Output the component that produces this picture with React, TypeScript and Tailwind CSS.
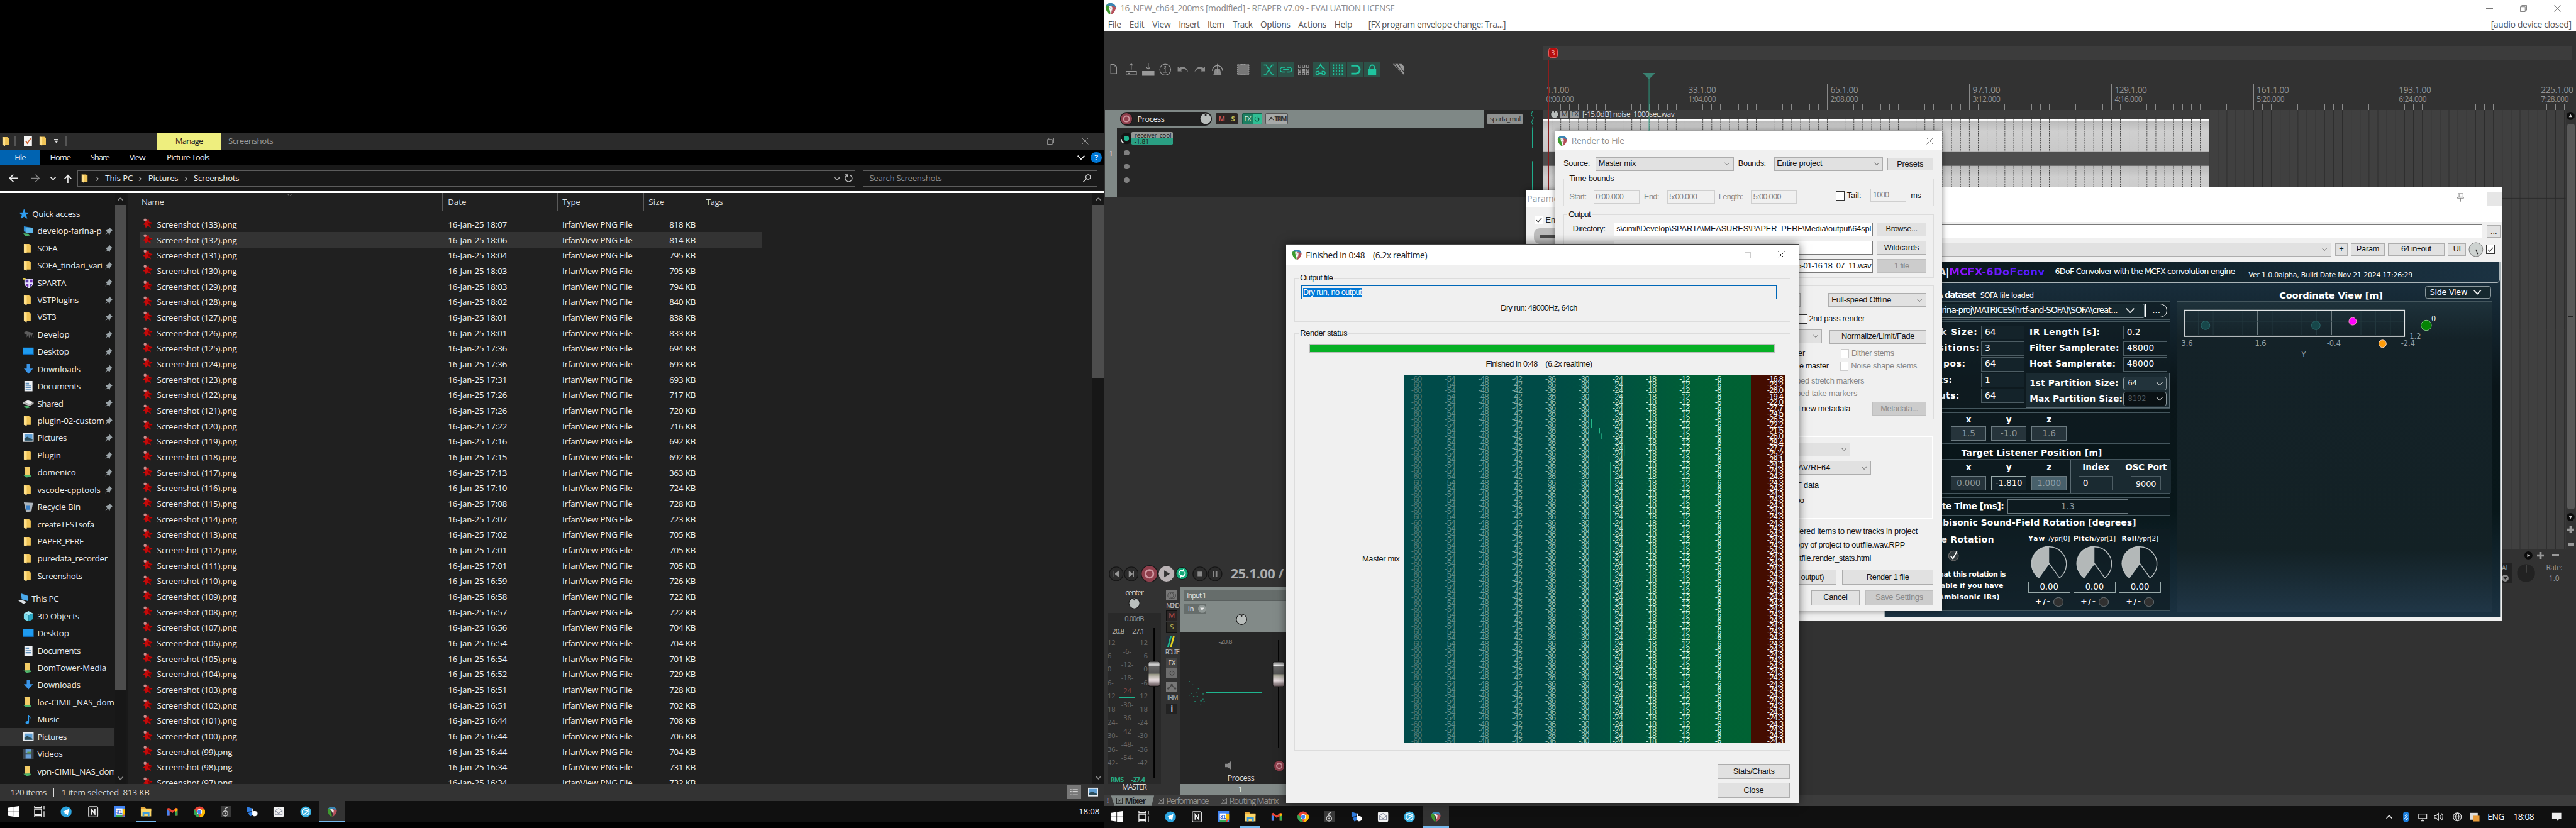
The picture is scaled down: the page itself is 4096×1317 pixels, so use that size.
import React, { useLayoutEffect, useRef, useState } from "react";

/* ---------- text fitted to a known advance width ---------- */
let measure: CanvasRenderingContext2D | null = null;
function T({ w, c = "", children }: { w?: number; c?: string; children: string }) {
  const ref = useRef<HTMLSpanElement>(null);
  const [ls, setLs] = useState(0);
  useLayoutEffect(() => {
    if (!w || !ref.current) return;
    measure = measure || document.createElement("canvas").getContext("2d");
    if (!measure) return;
    const cs = getComputedStyle(ref.current);
    measure.font = `${cs.fontWeight} ${cs.fontSize} ${cs.fontFamily}`;
    setLs((w - measure.measureText(children).width) / children.length);
  }, [w, children]);
  return (
    <span ref={ref} className={"whitespace-pre shrink-0 " + c} style={{ letterSpacing: ls }}>
      {children}
    </span>
  );
}

const UI = "font-['Open_Sans','Noto_Sans',sans-serif]";
const MS = "font-['Liberation_Sans',sans-serif]";
const VD = "font-['DejaVu_Sans',sans-serif]";

/* ---------- icons ---------- */
const Reaper = ({ s = "w-[20px] h-[20px]" }: { s?: string }) => (
  <svg viewBox="0 0 20 20" className={s + " shrink-0"}>
    <path d="M10 0C4 0 1 4 1 7c0 5 4 11 8 13 1-4-1-8-2-11C6 6 8 4 10 4z" fill="#3f9b2f" />
    <path d="M2 4C4 1 7 0 10 0c5 0 8 3 9 7l-4 1c-1-3-4-4-7-4z" fill="#3b86b5" />
    <path d="M7 6c3-2 8-1 12 1 0 5-4 11-9 13 2-4 2-8-3-14z" fill="#b5505a" />
    <path d="M6 5c3-1 6 0 7 3l-1 7C11 11 9 8 6 5z" fill="#eef2f0" />
  </svg>
);
const Folder = ({ s = "w-[14px] h-[18px]" }: { s?: string }) => (
  <svg viewBox="0 0 14 18" className={s + " shrink-0"}>
    <path d="M1 1h9l3 2v13H3z" fill="#f0c457" />
    <path d="M1 1l5 1v16l-5-2z" fill="#ffe08a" />
  </svg>
);
const Pin = () => (
  <svg viewBox="0 0 14 14" className="w-[14px] h-[14px] shrink-0">
    <path d="M8 0l6 6-2 1-2 3-1 3-3-3-5 4 4-5-3-3 3-1 3-2z" fill="#9aa3a8" />
  </svg>
);
function NavIcon({ k }: { k: string }) {
  if (k === "f") return <Folder />;
  return (
    <svg viewBox="0 0 18 18" className="w-[18px] h-[18px] shrink-0">
      {k === "star" && <path d="M9 0l2.400 6.200 6.600.4-5.200 4.200 1.800 6.700L9 13.700l-5.600 3.800 1.800-6.700L0 6.600l6.600-.4z" fill="#2f9df0" />}
      {k === "net" && <><path d="M1 1l12 2v9L1 10z" fill="#2f8fd6" /><path d="M4 3l13 1v9L4 12z" fill="#5db5ea" /><path d="M0 13l9 1 3 3-8 1z" fill="#4db36b" /></>}
      {k === "shield" && <><path d="M2 1h15v8c0 4-3 7-7 9-5-2-8-5-8-9z" fill="#e6e0ff" /><path d="M4 3h5v5H4zM11 10h5c-1 3-3 5-5 6z" fill="#5a3aa8" /><path d="M11 3h5v5h-5zM4 10h5v6c-3-1-5-4-5-6z" fill="#6a2ab0" /><path d="M0 0h4v3H0z" fill="#e8d24a" /></>}
      {k === "horse" && <path d="M0 6l5-3 12 3 1 8h-1l-1-6-2 7-1-6-3 6-1-6-3 5V9z" fill="#5d5d5d" />}
      {k === "desk" && <><path d="M0 2h18v13H0z" fill="#1e9bf0" /><path d="M0 13h18v2H0z" fill="#0b62b0" /></>}
      {k === "down" && <path d="M6 0h6v8h5l-8 9-8-9h5z" fill="#3a95e8" />}
      {k === "doc" && <><path d="M2 0h14v18H2z" fill="#eef1f4" /><path d="M4 3h6v3H4zM4 8h10v1H4zM4 11h10v1H4zM4 14h10v1H4z" fill="#5c8db8" /></>}
      {k === "drive" && <><path d="M0 7l8-3 10 3-7 4z" fill="#e8e8e8" /><path d="M0 7l11 4v3L0 10zM18 7l-7 4v3l7-4z" fill="#b5b5b5" /><path d="M0 13l9 1 2 3-6 1z" fill="#4db36b" /></>}
      {k === "pic" && <><path d="M0 1h18v15H0z" fill="#e9eef3" /><path d="M2 3h14v11H2z" fill="#5f9fd4" /><path d="M2 10l5-3 9 5v2H2z" fill="#2c4c5a" /></>}
      {k === "fnet" && <><path d="M2 0h9v14H3z" fill="#f3cc66" /><path d="M0 14l12-1 2 3-8 2z" fill="#4db36b" /></>}
      {k === "bin" && <><path d="M1 1l16 1-3 15-9 1z" fill="#aeb6bd" /><path d="M5 7h7v7H5z" fill="#3a7fc4" /></>}
      {k === "pc" && <><path d="M5 0l12 4v9L6 10z" fill="#4aa8ea" /><path d="M0 12l6-1 9 4-6 3z" fill="#dadfe3" /></>}
      {k === "cube" && <><path d="M1 4l8-4 8 4-8 3z" fill="#a6eaf5" /><path d="M1 4l8 3v11l-8-4z" fill="#7bdcec" /><path d="M17 4L9 7v11l8-4z" fill="#2ba7c4" /></>}
      {k === "music" && <path d="M8 0c1 3 5 4 5 8-1-2-2-3-3-3v9c0 5-7 4-6 0 1-2 3-2 4-2z" fill="#2f9df0" />}
      {k === "vid" && <><path d="M0 0h18v18H0z" fill="#3c4650" /><path d="M4 1h10v7H4zM4 10h10v7H4z" fill="#6aa0d8" /><path d="M7 5h7v3H7z" fill="#5f9a4c" /></>}
    </svg>
  );
}
const Splat = () => (
  <svg viewBox="0 0 18 18" className="w-[18px] h-[18px] shrink-0">
    <path d="M2 1l5 3 3-3 1 5 6 2-4 3 1 6-5-4-4 4-1-5-4-1 4-3z" fill="#c40a0a" />
    <path d="M8 7l8 2-5 4z" fill="#8a0000" />
    <circle cx="4" cy="3" r="2.500" fill="#c98c8c" />
  </svg>
);
const Chev = ({ c = "w-[9px] h-[6px]", col = "#555", sw = 1.2 }: { c?: string; col?: string; sw?: number }) => (
  <svg viewBox="0 0 10 6" className={c + " shrink-0"}><path d="M.5.5L5 5.200 9.500.5" fill="none" stroke={col} strokeWidth={sw} /></svg>
);
const Cross = ({ col = "#777" }: { col?: string }) => (
  <svg viewBox="0 0 12 12" className="w-[12px] h-[12px] shrink-0"><path d="M.5.5l11 11M11.500.5l-11 11" stroke={col} strokeWidth="1" /></svg>
);
const Restore = ({ col = "#777" }: { col?: string }) => (
  <svg viewBox="0 0 12 12" className="w-[12px] h-[12px] shrink-0"><path d="M.5 3h8.500v8.500H.5zM3 3V.5h8.500V9H9" fill="none" stroke={col} /></svg>
);
const Power = ({ col }: { col: string }) => (
  <svg viewBox="0 0 10 10" className="w-[10px] h-[10px] shrink-0"><path d="M5 .5v4M3 2a3.600 3.600 0 104 0" fill="none" stroke={col} strokeWidth="1.300" /></svg>
);
const XBox = ({ col }: { col: string }) => (
  <svg viewBox="0 0 12 12" className="w-[11px] h-[11px] shrink-0"><path d="M.5.5h11v11H.5zM3 3l6 6M9 3L3 9" fill="none" stroke={col} strokeWidth="1.200" /></svg>
);

/* ---------- taskbar ---------- */
function TaskIcon({ i }: { i: number }) {
  return (
    <svg viewBox="0 0 20 20" className="w-[20px] h-[20px]">
      {i === 0 && <path d="M0 3l9-1.300V9.500H0zM10 1.500L20 0v9.500H10zM0 10.500h9v7.800L0 17zM10 10.500h10V20l-10-1.500z" fill="#fff" />}
      {i === 1 && <path d="M1 0v3h12V0M1 20v-3h12v3M1 5.500h12v9H1zM17.500 0v5M17.500 9v11M16 7h3" fill="none" stroke="#eee" strokeWidth="1.400" />}
      {i === 2 && <><circle cx="10" cy="10" r="9.500" fill="#2ca5e0" /><path d="M4 10l11-5-2 11-4-3-1 2-1-4z" fill="#fff" /></>}
      {i === 3 && <><rect x="2" y="1" width="16" height="18" rx="2" fill="#222" stroke="#ddd" strokeWidth="1.500" /><path d="M7 15V6l6 8V5.500" fill="none" stroke="#eee" strokeWidth="2" /></>}
      {i === 4 && <><path d="M0 0h20v20H0z" fill="#4285f4" /><path d="M15 5h5v10h-5z" fill="#fbbc04" /><path d="M4 15h11v5H4z" fill="#34a853" /><path d="M15 15h5l-5 5z" fill="#ea4335" /><path d="M4 4h11v11H4z" fill="#fff" /><text x="9.500" y="13" fontSize="9" fontWeight="700" textAnchor="middle" fill="#3367d6" fontFamily="Liberation Sans, sans-serif">31</text></>}
      {i === 5 && <><path d="M1 2h7l2 2h9v5H1z" fill="#e8a93a" /><path d="M1 5h18v13H1z" fill="#fcd667" /><path d="M4 10h12v8h-3v-4H7v4H4z" fill="#3e9bdc" /></>}
      {i === 6 && <><path d="M1 4v13h4V8l5 4 5-4v9h4V4l-3-1-6 5-6-5z" fill="#ea4335" /><path d="M1 7v10h4V9z" fill="#4285f4" /><path d="M19 7v10h-4V9z" fill="#34a853" /><path d="M15 4l4 0v4l-4 2z" fill="#fbbc04" /></>}
      {i === 7 && <><circle cx="10" cy="10" r="9.500" fill="#ea4335" /><path d="M1 6l6 6 3 7.500A9.500 9.500 0 011 6z" fill="#34a853" /><path d="M10 6h9a9.500 9.500 0 01-9 13.500l4-8z" fill="#fbbc04" /><circle cx="10" cy="10" r="4.500" fill="#fff" /><circle cx="10" cy="10" r="3.400" fill="#4285f4" /></>}
      {i === 8 && <><path d="M1 0h18v20H1z" fill="#3a3a3a" /><circle cx="9" cy="13" r="4.500" fill="none" stroke="#c9c9c9" strokeWidth="1.600" /><circle cx="9" cy="13" r="1.500" fill="#c9c9c9" /><path d="M8 8l1-4 4-2" fill="none" stroke="#c9c9c9" strokeWidth="1.600" /></>}
      {i === 9 && <><path d="M1 1l9 3-1 5-8 1z" fill="#2f7de1" /><path d="M3 12l8-3 2 6-7 3z" fill="#2f7de1" /><path d="M10 4l2 0v5c5-1 8 1 7 5 0 3-3 4-6 4l-3-3z" fill="#fff" /></>}
      {i === 10 && <><rect x="1" y="1" width="18" height="18" rx="3" fill="#f2f2f2" /><path d="M4 8l6-4 6 4v7H4zM4 8l6 5 6-5" fill="none" stroke="#8a8fa0" strokeWidth="1.200" /></>}
      {i === 11 && <><circle cx="10" cy="10" r="9.500" fill="#37b1e2" /><circle cx="10" cy="10" r="6" fill="none" stroke="#fff" strokeWidth="1.600" /><path d="M5 6l9 3-8 6" fill="none" stroke="#fff" strokeWidth="1.600" /></>}
    </svg>
  );
}
function TaskApps() {
  return (
    <>
      {Array.from({ length: 13 }, (_, i) => (
        <div key={i} className={"flex flex-col items-center justify-center w-[46.200px] h-full shrink-0 relative " + (i === 12 ? "bg-[#333]" : "")}>
          {i < 12 ? <TaskIcon i={i} /> : <Reaper s="w-[18px] h-[20px]" />}
          {(i === 5 || i === 12) && <div className={"absolute bottom-0 h-[3px] bg-[#76b9ed] " + (i === 5 ? "w-[35px]" : "w-full")} />}
        </div>
      ))}
    </>
  );
}

/* ---------- file explorer ---------- */
const nav1: [string, string, number][] = [
  ["develop-farina-p", "net", 112], ["SOFA", "f", 35], ["SOFA_tindari_vari", "f", 113], ["SPARTA", "shield", 50],
  ["VSTPlugins", "f", 72], ["VST3", "f", 33], ["Develop", "horse", 56], ["Desktop", "desk", 55], ["Downloads", "down", 75],
  ["Documents", "doc", 75], ["Shared", "drive", 45], ["plugin-02-custom", "f", 116], ["Pictures", "pic", 51], ["Plugin", "f", 41],
  ["domenico", "fnet", 67], ["vscode-cpptools", "f", 110], ["Recycle Bin", "bin", 75], ["createTESTsofa", "f", 99],
  ["PAPER_PERF", "f", 80], ["puredata_recorder", "f", 122], ["Screenshots", "f", 78],
];
const nav2: [string, string, number][] = [
  ["3D Objects", "cube", 73], ["Desktop", "desk", 55], ["Documents", "doc", 75], ["DomTower-Media", "fnet", 120],
  ["Downloads", "down", 75], ["loc-CIMIL_NAS_dom", "fnet", 134], ["Music", "music", 38], ["Pictures", "pic", 51],
  ["Videos", "vid", 44], ["vpn-CIMIL_NAS_dom", "fnet", 138],
];
const files: [string, string][] = [
  ["18:07", "818"], ["18:06", "814"], ["18:04", "795"], ["18:03", "795"], ["18:03", "794"], ["18:02", "840"], ["18:01", "838"],
  ["18:01", "833"], ["17:36", "694"], ["17:36", "693"], ["17:31", "693"], ["17:26", "717"], ["17:26", "720"], ["17:22", "716"],
  ["17:16", "692"], ["17:15", "692"], ["17:13", "363"], ["17:10", "724"], ["17:08", "728"], ["17:07", "723"], ["17:02", "705"],
  ["17:01", "705"], ["17:01", "705"], ["16:59", "726"], ["16:58", "722"], ["16:57", "722"], ["16:56", "704"], ["16:54", "704"],
  ["16:54", "701"], ["16:52", "729"], ["16:51", "728"], ["16:51", "702"], ["16:44", "708"], ["16:44", "706"], ["16:44", "704"],
  ["16:34", "731"], ["16:34", "732"],
];
function NavRow({ t, k, w, pin, sel }: { t: string; k: string; w: number; pin?: boolean; sel?: boolean }) {
  return (
    <div className={"flex items-center h-[30px] w-[199px] overflow-hidden shrink-0 pl-[41px] " + (sel ? "bg-[#333]" : "")}>
      <div className="w-[24px] flex items-center shrink-0"><NavIcon k={k} /></div>
      <div className="w-[114px] flex grow leading-[20px] overflow-hidden"><T w={w}>{t}</T></div>
      {pin && <div className="w-[17px] shrink-0"><Pin /></div>}
    </div>
  );
}
function Explorer() {
  return (
    <div className={"absolute left-0 top-[231px] w-[1920px] h-[1200px] flex flex-col text-[14.500px] leading-none text-[#f0f0f0] bg-[#191919] " + UI}>
      <div className="h-[29px] flex items-center bg-[#2b2b2b] shrink-0">
        <Folder s="w-[13px] h-[19px] ml-[3px]" />
        <div className="w-[2px] h-[17px] bg-[#555] ml-[9px]" />
        <svg viewBox="0 0 14 18" className="w-[14px] h-[18px] ml-[15px]"><path d="M0 0h14v18H0z" fill="#f4f4f4" /><path d="M3 9l3 4 6-9" stroke="#d0632f" fill="none" strokeWidth="2" /></svg>
        <Folder s="w-[13px] h-[18px] ml-[12px]" />
        <svg viewBox="0 0 8 8" className="w-[8px] h-[8px] ml-[13px]"><path d="M0 0h8v1.200H0zM.5 3h7L4 7.500z" fill="#ddd" /></svg>
        <div className="w-[2px] h-[17px] bg-[#555] ml-[12px]" />
        <div className="w-[110px] h-full bg-[#eeee7e] text-[#222] flex items-center justify-center ml-[158px]"><T w={48}>Manage</T></div>
        <T w={78} c="ml-[13px] text-[#9a9a9a]">Screenshots</T>
        <div className="grow" />
        <div className="w-[12px] h-[1px] bg-[#999]" />
        <div className="ml-[46px] flex"><Restore col="#999" /></div>
        <div className="ml-[48px] mr-[27px] flex"><Cross col="#999" /></div>
      </div>
      <div className="h-[28px] flex items-center bg-black shrink-0">
        <div className="w-[70px] h-full bg-[#0063b1] flex items-center justify-center"><T w={19}>File</T></div>
        <T w={35} c="ml-[17px]">Home</T>
        <T w={33} c="ml-[35px]">Share</T>
        <T w={27} c="ml-[35px]">View</T>
        <div className="w-[110px] h-full ml-[20px] border-x border-[#1d1d1d] flex items-center justify-center"><T w={74}>Picture Tools</T></div>
        <div className="grow" />
        <Chev c="w-[13px] h-[8px]" col="#eee" sw={1.500} />
        <div className="w-[19px] h-[19px] rounded-full bg-[#0078d7] text-white flex items-center justify-center ml-[10px] mr-[4px] font-bold text-[13px]">?</div>
      </div>
      <div className="h-[45px] flex items-center shrink-0">
        <svg viewBox="0 0 16 14" className="w-[16px] h-[14px] ml-[15px]"><path d="M16 7H1.500M8 .7L1.500 7 8 13.300" fill="none" stroke="#eee" strokeWidth="2" /></svg>
        <svg viewBox="0 0 16 14" className="w-[16px] h-[14px] ml-[23px]"><path d="M0 7h14.500M8 .7L14.500 7 8 13.300" fill="none" stroke="#888" strokeWidth="1.500" /></svg>
        <Chev c="w-[10px] h-[6px] ml-[17px]" col="#eee" sw={1.800} />
        <svg viewBox="0 0 14 16" className="w-[13px] h-[16px] ml-[15px]"><path d="M7 16V1.500M.7 8L7 1.500 13.300 8" fill="none" stroke="#eee" strokeWidth="2" /></svg>
        <div className="w-[1353px] h-[28px] border border-[#5c5c5c] ml-[10px] flex items-center">
          <Folder s="w-[12px] h-[17px] ml-[5px]" />
          <Chev c="w-[8px] h-[5px] ml-[12px] -rotate-90" col="#aaa" sw={1.600} /><T w={48} c="ml-[10px]">This PC</T>
          <Chev c="w-[8px] h-[5px] ml-[9px] -rotate-90" col="#aaa" sw={1.600} /><T w={52} c="ml-[10px]">Pictures</T>
          <Chev c="w-[8px] h-[5px] ml-[9px] -rotate-90" col="#aaa" sw={1.600} /><T w={79} c="ml-[10px]">Screenshots</T>
          <div className="grow" />
          <Chev c="w-[11px] h-[7px]" col="#aaa" sw={1.800} />
          <svg viewBox="0 0 14 14" className="w-[14px] h-[14px] ml-[8px] mr-[4px]"><path d="M5 1.500A6 6 0 1010 2M5 5V1H1" fill="none" stroke="#bbb" strokeWidth="1.600" /></svg>
        </div>
        <div className="w-[408px] h-[28px] border border-[#5c5c5c] ml-[13px] flex items-center">
          <T w={126} c="ml-[10px] text-[#8f8f8f]">Search Screenshots</T>
          <div className="grow" />
          <svg viewBox="0 0 14 14" className="w-[14px] h-[14px] mr-[10px]"><circle cx="9" cy="5" r="4" fill="none" stroke="#ddd" strokeWidth="1.400" /><path d="M6 8l-5.500 5.500" stroke="#ddd" strokeWidth="1.600" /></svg>
        </div>
      </div>
      <div className="h-[3px] bg-white shrink-0" />
      <div className="h-[1028px] flex overflow-hidden shrink-0">
        <div className="w-[200px] pt-[21px] overflow-hidden">
          <div className="flex items-center h-[30px] pl-[33px]"><NavIcon k="star" /><T w={83} c="ml-[5px] leading-[20px]">Quick access</T></div>
          {nav1.map(([t, k, w], i) => <NavRow key={i} t={t} k={k} w={w} pin={i < 17} />)}
          <div className="flex items-center h-[30px] pl-[32px] mt-[10px]"><NavIcon k="pc" /><T w={47} c="ml-[5px] leading-[20px]">This PC</T></div>
          {nav2.map(([t, k, w], i) => <NavRow key={i} t={t} k={k} w={w} sel={i === 7} />)}
        </div>
        <div className="w-[20px] bg-[#171717] flex flex-col items-center">
          <Chev c="w-[10px] h-[6px] mt-[8px] rotate-180" col="#888" sw={1.800} />
          <div className="w-full h-[844px] mt-[7px] bg-[#4d4d4d]" />
          <Chev c="w-[10px] h-[6px] mt-[150px]" col="#888" sw={1.800} />
        </div>
        <div className="w-[3px] border-r border-[#2f2f2f]" />
        <div className="w-[1677px] bg-[#202020] overflow-hidden">
          <div className="flex h-[32px] items-center text-[#dedede]">
            <div className="w-[547px] h-full border-r border-[#5a5a5a] flex items-center pl-[23px] justify-start">
              <T w={39}>Name</T>
              <Chev c="w-[10px] h-[5px] ml-[214px] -mt-[26px]" col="#888" />
            </div>
            <div className="w-[200px] h-full border-r border-[#5a5a5a] flex items-center pl-[9px]"><T w={32}>Date</T></div>
            <div className="w-[150px] h-full border-r border-[#5a5a5a] flex items-center pl-[8px]"><T w={31}>Type</T></div>
            <div className="w-[100px] h-full border-r border-[#5a5a5a] flex items-center pl-[8px]"><T w={28}>Size</T></div>
            <div className="w-[111px] h-full border-r border-[#5a5a5a] flex items-center pl-[8px]"><T w={29}>Tags</T></div>
          </div>
          <div className="pt-[9px]">
            {files.map(([d, s], i) => (
              <div key={i} className={"ml-[21px] w-[1081px] h-[27px] flex items-center leading-[22px] " + (i === 1 ? "bg-[#333]" : "")}>
                <div className="w-[29px] pl-[4px] -mt-[3px]"><Splat /></div>
                <div className="w-[506px] flex"><T w={i > 33 ? 131 : 139}>{`Screenshot (${133 - i}).png`}</T></div>
                <div className="w-[199px] flex"><T w={103}>{`16-Jan-25 ${d}`}</T></div>
                <div className="w-[151px] flex"><T w={122}>IrfanView PNG File</T></div>
                <div className="w-[81px] flex justify-end"><T w={46}>{`${s} KB`}</T></div>
              </div>
            ))}
          </div>
        </div>
        <div className="w-[20px] bg-[#171717] flex flex-col items-center">
          <Chev c="w-[10px] h-[6px] mt-[8px] rotate-180" col="#888" sw={1.800} />
          <div className="w-full h-[300px] mt-[7px] bg-[#4d4d4d]" />
          <Chev c="w-[10px] h-[6px] mt-auto mb-[8px]" col="#888" sw={1.800} />
        </div>
      </div>
      <div className="h-[29px] bg-[#333] flex items-center shrink-0 text-[#dcdcdc]">
        <T w={63} c="ml-[18px]">120 items</T>
        <div className="w-px h-[14px] bg-[#ddd] ml-[12px]" />
        <T w={153} c="ml-[13px]">1 item selected  813 KB</T>
        <div className="w-px h-[14px] bg-[#ddd] ml-[13px]" />
        <div className="grow" />
        <div className="w-[24px] h-[24px] bg-[#777] flex items-center justify-center">
          <svg viewBox="0 0 14 12" className="w-[14px] h-[12px]"><path d="M0 1h3M0 4h3M0 7h3M0 10h3M5 1h9M5 4h9M5 7h9M5 10h9" stroke="#eee" /></svg>
        </div>
        <div className="ml-[12px] mr-[10px] flex"><NavIcon k="pic" /></div>
      </div>
      <div className="h-[38px] bg-[#101010] flex items-center">
        <TaskApps />
        <div className="grow" />
        <T w={36} c="mr-[8px] text-white">18:08</T>
      </div>
    </div>
  );
}

/* ---------- Reaper main window ---------- */
const menu: [string, number, string][] = [
  ["File", 23, "ml-[7px]"], ["Edit", 26, "ml-[14px]"], ["View", 32, "ml-[14px]"], ["Insert", 36, "ml-[14px]"], ["Item", 29, "ml-[14px]"],
  ["Track", 34, "ml-[15px]"], ["Options", 52, "ml-[14px]"], ["Actions", 49, "ml-[14px]"], ["Help", 31, "ml-[14px]"],
  ["[FX program envelope change: Tra...]", 239, "ml-[28px]"],
];
const tools = [
  <path key="0" d="M9 5h6l4 4v12H9zM15 5v4h4" />,
  <path key="1" d="M5 17h18v6H5zM14 14V4M11 7l3-3 3 3M8 20h3" />,
  <><path key="2" d="M14 3v10M11 10l3 3 3-3" /><path d="M4 17h20v7H4z" fill="#9a9a9a" /></>,
  <><circle key="3" cx="14" cy="14" r="9.500" /><path d="M12 12h2v6M11 18.500h6" /><circle cx="14" cy="9" r="1" /></>,
  <path key="4" d="M5 9v8h8l-3-2c4-4 9-3 13 3-1-7-8-12-15-7z" fill="#8a8a8a" stroke="none" />,
  <path key="5" d="M23 9v8h-8l3-2c-4-4-9-3-13 3 1-7 8-12 15-7z" fill="#8a8a8a" stroke="none" />,
  <><path key="6" d="M10 12h8l3 11H7z" fill="#8a8a8a" stroke="none" /><path d="M14 20V4M5 16c0-12 18-12 18 0" /></>,
];
const gtools = [
  <path key="0" d="M5 6h4l10 16h4M23 6h-4L9 22H5" />,
  <path key="1" d="M12 10H8a4 4 0 000 8h4M16 10h4a4 4 0 010 8h-4M9 14h10" />,
  null,
  <path key="3" d="M6 13l5-3 3-5 3 5 5 3M12 17H9a3 3 0 000 6h3M16 17h3a3 3 0 010 6h-3M10 20h8" />,
  <path key="4" d="M6 5v18M11 5v18M16 5v18M21 5v18" strokeDasharray="3 2" />,
  <path key="5" d="M7 7h8a7 7 0 010 14H7" strokeWidth="3" />,
  <><path key="6" d="M7 13h14v10H7z" fill="#1fc59f" stroke="none" /><path d="M10 13v-3a4 4 0 018 0v3" strokeWidth="2" /></>,
];
function Toolbar() {
  return (
    <div className="h-[28px] mt-[53px] ml-[3px] flex items-center gap-[2px]">
      {tools.map((t, i) => (
        <svg key={i} viewBox="0 0 28 28" className="w-[28px] h-[28px]" fill="none" stroke="#9a9a9a" strokeWidth="1.300">{t}</svg>
      ))}
      <svg viewBox="0 0 28 28" className="w-[28px] h-[28px] ml-[15px]"><path d="M4 5h20v18H4z" fill="#777" stroke="#aaa" strokeDasharray="2 1.500" /></svg>
      <div className="w-[13px]" />
      {gtools.map((t, i) => t ? (
        <svg key={i} viewBox="0 0 28 28" className="w-[28px] h-[28px] bg-[#2c5248]" fill="none" stroke="#1fc59f" strokeWidth="1.600">{t}</svg>
      ) : (
        <svg key={i} viewBox="0 0 28 28" className="w-[28px] h-[28px]" fill="none" stroke="#9a9a9a" strokeWidth="1.200"><path d="M5 6h4v4H5zM12 6h4v4h-4zM19 6h4v4h-4zM5 12.500h4v4H5zM19 12.500h4v4h-4zM5 19h4v4H5zM12 19h4v4h-4zM19 19h4v4h-4z" /><path d="M12 12.500h4v4h-4z" fill="#9a9a9a" /></svg>
      ))}
      <svg viewBox="0 0 28 28" className="w-[28px] h-[28px] ml-[16px]" fill="#999"><path d="M3 4h15l5 5v16zM8 3l14 20" /><path d="M6 4l16 20M12 4l10 14" stroke="#333" strokeWidth="1.200" /></svg>
    </div>
  );
}
const Knob = ({ s = "w-[20px] h-[20px]" }: { s?: string }) => (
  <svg viewBox="0 0 20 20" className={s + " shrink-0"}><circle cx="10" cy="10" r="9" fill="#b9bebc" stroke="#1b1b1b" strokeWidth="1.200" /><circle cx="10" cy="4" r="1.500" fill="#222" /></svg>
);
const Rec = ({ s = "w-[21px] h-[21px]" }: { s?: string }) => (
  <svg viewBox="0 0 20 20" className={s + " shrink-0"}><circle cx="10" cy="10" r="9.500" fill="#8f3f4c" stroke="#1a1a1a" /><circle cx="10" cy="10" r="4.500" fill="none" stroke="#cf97a0" strokeWidth="2" /></svg>
);
const ruler: [string, string, number][] = [
  ["1.1.00", "0:00.000", 40], ["33.1.00", "1:04.000", 48], ["65.1.00", "2:08.000", 48], ["97.1.00", "3:12.000", 48],
  ["129.1.00", "4:16.000", 56], ["161.1.00", "5:20.000", 56], ["193.1.00", "6:24.000", 56], ["225.1.00", "7:28.000", 56],
];
function Arrange() {
  return (
    <svg viewBox="0 0 1779 764" className="w-[1779px] h-[764px] block" preserveAspectRatio="none">
      <defs>
        <pattern id="grid" width="15.447" height="764" patternUnits="userSpaceOnUse"><path d="M.5 0v764" stroke="#2a2a2a" /></pattern>
        <pattern id="dots" width="15.447" height="4" patternUnits="userSpaceOnUse"><path d="M.5 0v2.500" stroke="#333" /></pattern>
        <linearGradient id="wv" x1="0" x2="0" y1="0" y2="1"><stop offset="0" stopColor="#b9b9b9" /><stop offset=".35" stopColor="#cfcfcf" /><stop offset="1" stopColor="#c9c9c9" /></linearGradient>
      </defs>
      <rect width="1779" height="764" fill="#404040" />
      <rect width="1779" height="764" fill="url(#grid)" />
      <rect width="1159" height="16" fill="#3d3d3d" />
      <rect y="16" width="1159" height="137" fill="#4d4d4d" />
      <rect y="18" width="1159" height="54" fill="url(#wv)" />
      <rect y="97" width="1159" height="56" fill="url(#wv)" />
      <rect y="16" width="1159" height="2.500" fill="#fff" />
      <rect y="10" width="1159" height="62" fill="url(#dots)" />
      <rect y="97" width="1159" height="56" fill="url(#dots)" />
      <rect y="153" width="1779" height="1" fill="#2a2a2a" />
    </svg>
  );
}
function TrackPanel() {
  return (
    <div className="w-[763px] h-[152px] flex pl-[2px]">
      <div className="w-[20px] bg-[#7f8886] flex items-center justify-center text-white text-[12px]">1</div>
      <div className="grow bg-[#262626] flex flex-col">
        <div className="h-[32px] flex items-center bg-[#262626]">
          <div className="w-[638px] h-full bg-[#7f8886] flex items-center">
            <div className="ml-[6px] w-[160px] h-[24px] rounded-full bg-[#222] flex items-center">
              <Rec s="w-[22px] h-[22px]" />
              <T w={47} c="ml-[8px] text-[#e6e6e6] text-[14px]">Process</T>
              <div className="grow" /><Knob s="w-[22px] h-[22px]" />
            </div>
            <div className="ml-[6px] w-[39px] h-[20px] rounded-[2px] bg-[#2b2524] flex items-center justify-around text-[12px] font-bold"><span className="text-[#c4524f]">M</span><span className="text-[#c5bd55]">S</span></div>
            <div className="ml-[7px] w-[35px] h-[20px] rounded-[2px] bg-[#1c7f62] border border-[#175b46] flex items-center text-[12px] text-[#c9f0e2] overflow-hidden"><T w={11} c="ml-[3px] mr-[4px]">FX</T><div className="grow h-full bg-[#2fbf94] flex items-center justify-center"><Power col="#0f4f3b" /></div></div>
            <div className="ml-[6px] w-[39px] h-[20px] rounded-[2px] bg-[#a7aaa9] border border-[#555] flex items-center justify-center text-[11px] font-bold text-[#333]">
              <svg viewBox="0 0 12 8" className="w-[12px] h-[9px]"><path d="M1 7l5-5 5 5" fill="none" stroke="#333" strokeWidth="1.300" /><circle cx="6" cy="2" r="1.700" fill="#333" /></svg>
              <T w={20}>TRIM</T>
            </div>
          </div>
          <div className="ml-[6px] w-[63px] h-[16px] rounded-[2px] bg-[#8f9190] flex items-center justify-center text-[12px] text-[#222]"><T w={53}>sparta_mul</T></div>
        </div>
        <div className="h-[36px] flex items-center pl-[6px]">
          <svg viewBox="0 0 22 22" className="w-[22px] h-[22px]"><circle cx="11" cy="11" r="10" fill="#151515" /><circle cx="11" cy="11" r="4.500" fill="#1fb58f" /><path d="M2 12c0 3 2 6 4 7" stroke="#ddd" strokeWidth="2" fill="none" /></svg>
          <div className="-ml-[2px] w-[72px] h-[22px] rounded-[2px] overflow-hidden text-[11px] text-[#1a1a1a]">
            <div className="h-[11px] bg-[#969896] pl-[5px] leading-[11px] overflow-hidden"><T w={64}>receiver_cool</T></div>
            <div className="h-[11px] bg-[#2a9f83] pl-[5px] leading-[11px]">-1.81</div>
          </div>
        </div>
        <div className="flex flex-col gap-[15px] pl-[13px] pt-[2px]">
          {[0, 1, 2].map(i => <div key={i} className="w-[9px] h-[9px] rounded-full bg-[#808080]" />)}
        </div>
      </div>
      <svg viewBox="0 0 10 152" className="absolute left-[740px] w-[10px] h-[152px]"><path d="M5 2l-2 6 4 5-3 8 2 6-1 6v33M5 89v63" stroke="#1fc59f" fill="none" /></svg>
    </div>
  );
}
const scaleSide = ["12", "6", "0-", "6-", "12-", "18-", "24-", "30-", "36-", "42-"];
const scaleR = ["12", "6", "-0", "-6", "-12", "-18", "-24", "-30", "-36", "-42"];
const scaleMid = ["-6-", "-12-", "-18-", "-24-", "-30-", "-36-", "-42-", "-48-", "-54-"];
const Fader = ({ h, y }: { h: number; y: number }) => (
  <svg viewBox={`0 0 22 ${h}`} className="w-[22px] shrink-0" height={h}>
    <defs><linearGradient id="fd" x1="0" x2="0" y1="0" y2="1"><stop offset="0" stopColor="#666" /><stop offset=".15" stopColor="#eee" /><stop offset=".2" stopColor="#666" /><stop offset=".48" stopColor="#555" /><stop offset=".52" stopColor="#998" /><stop offset=".75" stopColor="#e8dde0" /><stop offset="1" stopColor="#5b4d50" /></linearGradient></defs>
    <path d={`M11 0v${h}`} stroke="#000" strokeWidth="2" />
    <rect x="1" y={y} width="20" height="43" rx="3" fill="url(#fd)" stroke="#111" />
  </svg>
);
function Mixer() {
  return (
    <div className="flex h-[364px]">
      <div className="w-[99px] pl-[6px] flex flex-col items-center text-[12px]">
        <T w={31} c="mt-[5px] text-[13px] text-[#ddd]">center</T>
        <div className="mt-[1px] flex"><Knob s="w-[21px] h-[21px]" /></div>
        <div className="w-[93px] h-[298px] mt-[6px] bg-[#292929] flex flex-col">
          <T w={33} c="mx-auto mt-[5px] text-[#999]">0.00dB</T>
          <div className="flex items-start mt-[10px]">
            <div className="w-[70px] flex flex-col text-[#6a6a6a]">
              <div className="flex justify-between pl-[5px] pr-[6px] text-[#bbb] h-[14px]"><T w={24}>-20.8</T><T w={24}>-27.1</T></div>
              <div className="flex justify-between h-[244px]">
                <div className="w-[18px] flex flex-col">{scaleSide.map(s => <div key={s} className="h-[23.200px] leading-[22px]">{s}</div>)}</div>
                <div className="relative flex flex-col items-center mt-[15px] w-[28px]">
                  {scaleMid.map(s => <div key={s} className={"h-[23.200px] leading-[22px] " + (s === "-24-" ? "text-[#8a4a4a]" : "")}>{s}</div>)}
                  <div className="absolute left-0 top-[91px] w-[28px] h-[2px] bg-[#1fb58f]" />
                </div>
                <div className="w-[19px] flex flex-col items-end">{scaleR.map(s => <div key={s} className="h-[23.200px] leading-[22px]">{s}</div>)}</div>
              </div>
              <div className="flex justify-between px-[5px] text-[#27a982] font-bold"><T w={23}>RMS</T><T w={24}>-27.4</T></div>
            </div>
            <Fader h={261} y={58} />
          </div>
        </div>
        <T w={42} c="-mt-[1px] text-[13px] text-[#ddd]">MASTER</T>
      </div>
      <div className="w-[34px] flex flex-col items-center text-[11px] text-[#bbb] pt-[7px] pl-[4px]">
        <svg viewBox="0 0 20 18" className="w-[20px] h-[18px] shrink-0"><path d="M0 0h20v18H0z" fill="#777" /><circle cx="8" cy="9" r="5" fill="none" stroke="#444" /><circle cx="12" cy="9" r="5" fill="none" stroke="#444" /></svg>
        <T w={20} c="mt-[3px]">MONO</T>
        <div className="w-[20px] h-[19px] bg-[#2a2424] border border-[#111] mt-[3px] flex items-center justify-center text-[#c4524f] text-[12px]">M</div>
        <div className="w-[20px] h-[19px] bg-[#2a2824] border border-[#111] mt-px flex items-center justify-center text-[#c5bd55] text-[12px]">S</div>
        <svg viewBox="0 0 20 19" className="w-[20px] h-[19px] mt-[6px]"><path d="M0 0h20v19H0z" fill="#26323a" /><path d="M2 19L7 0h3L5 19z" fill="#1fb58f" /><path d="M7 19l5-19h3l-5 19z" fill="#e8d21e" /></svg>
        <T w={23} c="mt-[3px]">ROUTE</T>
        <div className="w-[20px] h-[18px] bg-[#444] mt-[5px] flex items-center justify-center text-[12px] text-[#ddd]">FX</div>
        <div className="w-[20px] h-[16px] bg-[#6d6d6d] flex items-center justify-center"><Power col="#333" /></div>
        <svg viewBox="0 0 20 18" className="w-[20px] h-[18px] mt-[7px]"><path d="M0 0h20v18H0z" fill="#777" /><path d="M4 13l6-7 6 7" stroke="#444" fill="none" strokeWidth="1.500" /><circle cx="10" cy="6" r="2" fill="#444" /><circle cx="4" cy="12" r="2" fill="#444" /><circle cx="16" cy="12" r="2" fill="#444" /></svg>
        <T w={19} c="mt-[4px]">TRIM</T>
        <div className="w-[20px] h-[18px] bg-[#222] mt-[6px] flex items-center justify-center text-[13px] font-bold text-[#ddd]">i</div>
      </div>
      <div className="w-[190px] bg-[#262626] flex flex-col">
        <div className="h-[80px] bg-[#828a88] pl-[6px] pt-[6px] shrink-0">
          <div className="h-[20px] bg-[#666d6b] border border-[#5a605f] flex items-center pl-[4px] text-[12px] text-[#e8e8e8]"><T w={33}>Input 1</T></div>
          <div className="w-[39px] h-[19px] rounded-[4px] bg-[#666d6b] mt-[4px] flex items-center pl-[7px] text-[12px] text-[#eee]">in<svg viewBox="0 0 14 14" className="ml-[7px] w-[14px] h-[14px]"><circle cx="7" cy="7" r="7" fill="#8f9795" /><path d="M3.500 5h7L7 10z" fill="#eee" /></svg></div>
          <div className="flex pl-[90px] -mt-[1px]"><Knob /></div>
        </div>
        <div className="h-[222px] flex items-start justify-end shrink-0 pt-[14px] pr-[8px]">
          <svg viewBox="0 0 140 200" className="w-[140px] h-[200px]">
            <path d="M30 91h98" stroke="#1fb58f" strokeWidth="1.500" />
            <path d="M0 72h2M6 78h2M16 85h2M12 92h2M0 96h2M8 98h2M4 93h2M14 98h2M24 94h3M20 106h3M26 107h2M10 107h2M20 113h2M24 103h2" stroke="#1fb58f" />
            <text x="52" y="6" fontSize="12" fill="#888" fontFamily="Open Sans, sans-serif" textLength="24">-20.8</text>
          </svg>
          <div className="ml-[6px]"><Fader h={187} y={38} /></div>
        </div>
        <div className="flex items-center justify-end h-[20px] pr-[8px] shrink-0">
          <svg viewBox="0 0 10 14" className="w-[10px] h-[14px] mr-[74px]"><path d="M0 4h4l6-4v14l-6-4H0z" fill="#8a8a8a" /></svg><Rec s="w-[20px] h-[20px]" />
        </div>
        <div className="flex grow items-center justify-center text-[14px] text-[#ddd]"><T w={47} c="mr-[-20px]">Process</T></div>
        <div className="h-[20px] bg-[#828a88] flex items-center justify-center text-[13px] text-[#eee] shrink-0"><span className="-mr-[18px]">1</span></div>
      </div>
    </div>
  );
}
const RoundBtn = ({ children }: { children: React.ReactNode }) => (
  <svg viewBox="0 0 26 26" className="w-[26px] h-[26px]"><circle cx="13" cy="13" r="12" fill="#2b2b2b" stroke="#161616" strokeWidth="1.500" />{children}</svg>
);
const ScrollDot = ({ d }: { d: string }) => (
  <svg viewBox="0 0 14 14" className="w-[14px] h-[14px] shrink-0"><circle cx="7" cy="7" r="7" fill="#0c0c0c" /><path d={d} fill="#ccc" /></svg>
);
const Plus = () => (
  <svg viewBox="0 0 12 12" className="w-[12px] h-[12px] shrink-0"><path d="M4 0h4v4h4v4H8v4H4V8H0V4h4z" fill="#999" /></svg>
);
function ReaperMain() {
  return (
    <div className={"absolute left-[1920px] top-0 w-[2560px] h-[1440px] bg-[#323232] leading-none flex flex-col " + UI}>
      <div className="h-[54px] bg-white shrink-0 text-[15px]">
        <div className="h-[30px] flex items-center text-[#8c8c8c]">
          <Reaper s="w-[20px] h-[20px] ml-[2px]" />
          <T w={478} c="ml-[6px] mt-[-1px]">16_NEW_ch64_200ms [modified] - REAPER v7.09 - EVALUATION LICENSE</T>
          <div className="grow" />
          <div className="w-[12px] h-px bg-[#777]" />
          <div className="ml-[47px] flex"><Restore /></div>
          <div className="ml-[47px] mr-[26px] flex"><Cross /></div>
        </div>
        <div className="h-[24px] flex items-center text-[#555]">
          {menu.map(([t, w, m]) => <T key={t} w={w} c={m}>{t}</T>)}
          <div className="grow" />
          <T w={140} c="mr-[8px]">[audio device closed]</T>
        </div>
      </div>
      <div className="flex h-[137px] shrink-0">
        <div className="w-[763px]"><Toolbar /></div>
        <div className="w-[1797px] pt-[26px]">
          <div className="h-[24px] w-[1789px] bg-[#3c3c3c] flex items-center">
            <div className="ml-[10px] w-[16px] h-[17px] rounded-[5px] bg-[#b80e0e] border border-[#e06060] text-[#f5b0b0] text-[12px] flex items-center justify-center">3</div>
          </div>
          <div className="mt-[42px] h-[45px] flex overflow-hidden text-[#939393]">
            {ruler.map(([a, b, w]) => (
              <div key={a} className="w-[247.150px] h-[45px] border-l border-[#8a8a8a] shrink-0 pl-[5px] flex flex-col items-start">
                <T w={w} c="text-[15px] mt-[3px]">{a}</T>
                <div className="h-px w-[48px] bg-[#8a8a8a] mt-[-1px] shrink-0" />
                <T w={48} c="text-[13px] mt-[2px]">{b}</T>
              </div>
            ))}
          </div>
          <div className="h-[10px] -mt-[10px] bg-[repeating-linear-gradient(90deg,#8a8a8a_0_1px,transparent_1px_15.447px)]" />
        </div>
      </div>
      <div className="flex h-[764px] shrink-0 relative">
        <TrackPanel />
        <Arrange />
        <div className="w-[18px] bg-[#333] flex flex-col items-center pt-[4px]">
          <ScrollDot d="M4 9h6L7 4z" />
          <div className="w-[13px] h-[670px] mt-[7px] rounded-[4px] bg-[#595959] flex flex-col pt-[334px] items-center"><div className="w-[8px] h-[2px] bg-[#222]" /></div>
          <div className="mt-[7px] flex"><ScrollDot d="M4 5h6l-3 5z" /></div>
          <div className="mt-[8px] flex"><Plus /></div>
          <span className="w-[11px] h-[4px] bg-[#999] mt-[18px]" />
        </div>
      </div>
      <div className="flex h-[65px] shrink-0 items-start">
        <div className="flex items-center pl-[8px] pt-[28px]">
          <RoundBtn><path d="M9 8v10M17 8l-6 5 6 5z" stroke="#999" fill="#999" /></RoundBtn>
          <RoundBtn><path d="M17 8v10M9 8l6 5-6 5z" stroke="#999" fill="#999" /></RoundBtn>
          <div className="ml-[4px] flex"><Rec s="w-[30px] h-[30px]" /></div>
          <svg viewBox="0 0 30 30" className="w-[30px] h-[30px]"><circle cx="15" cy="15" r="14" fill="#b9b2b4" stroke="#222" /><path d="M11 9l10 6-10 6z" fill="#333" /></svg>
          <svg viewBox="0 0 24 24" className="w-[23px] h-[24px]"><circle cx="12" cy="12" r="11" fill="#12a878" stroke="#111" /><path d="M7 15a6 6 0 018-8M17 9a6 6 0 01-8 8M15 4v4h-4M9 20v-4h4" fill="none" stroke="#fff" strokeWidth="2" /></svg>
          <div className="ml-[7px] flex"><RoundBtn><path d="M9 9h8v8H9z" fill="#888" /></RoundBtn><RoundBtn><path d="M9 8h3v10H9zM14 8h3v10h-3z" fill="#888" /></RoundBtn></div>
          <T w={92} c="ml-[14px] text-[24px] font-bold text-[#adadad]">25.1.00 /</T>
        </div>
        <div className="grow" />
        <div className="flex flex-col w-[131px] text-[#999]">
          <div className="flex items-center h-[22px] pl-[41px]">
            <ScrollDot d="M5 4v6l5-3z" /><div className="ml-[8px] flex"><Plus /></div><span className="w-[12px] h-[4px] bg-[#999] ml-[15px]" />
          </div>
          <div className="flex items-center mt-[2px]">
            <div className="w-[20px] h-[36px] bg-[#222] rounded-r-[3px] text-[11px] flex flex-col items-start justify-around pl-[2px]">AL<svg viewBox="0 0 14 14" className="w-[12px] h-[12px]"><circle cx="7" cy="7" r="7" fill="#888" /><path d="M3 5h8l-4 5z" fill="#222" /></svg></div>
            <svg viewBox="0 0 32 32" className="w-[32px] h-[32px] ml-[8px]"><circle cx="16" cy="16" r="15.500" fill="#222" /><path d="M16 1v14" stroke="#ddd" strokeWidth="1.200" /></svg>
            <div className="ml-[19px] flex flex-col items-center text-[13px] gap-[5px]"><T w={28}>Rate:</T><T>1.0</T></div>
          </div>
        </div>
      </div>
      <Mixer />
      <div className="h-[18px] bg-[#3c3c3c] flex items-center shrink-0 text-[15px] text-[#8f8f8f]">
        <span className="ml-[5px] text-white text-[12px]">!</span>
        <div className="ml-[4px] w-[75px] h-full bg-[#828a88] text-[#222] font-bold flex items-center pl-[9px] [clip-path:polygon(0_0,100%_0,94%_100%,8%_100%)]"><XBox col="#222" /><T w={36} c="ml-[4px]">Mixer</T></div>
        <div className="ml-[6px] flex items-center"><XBox col="#8f8f8f" /><T w={73} c="ml-[4px]">Performance</T></div>
        <div className="ml-[22px] flex items-center"><XBox col="#8f8f8f" /><T w={85} c="ml-[4px]">Routing Matrix</T></div>
      </div>
      <div className="h-[38px] bg-[#101010] flex items-center shrink-0 text-white text-[15px]">
        <TaskApps />
        <div className="grow" />
        <Chev c="w-[11px] h-[7px] rotate-180" col="#eee" sw={1.500} />
        <svg viewBox="0 0 20 20" className="w-[18px] h-[18px] ml-[14px]"><rect x="5" width="11" height="20" rx="5" fill="#1a7fe0" /><path d="M7 6l7 7-3.500 3V4L14 7l-7 7" fill="none" stroke="#fff" strokeWidth="1.200" /></svg>
        <svg viewBox="0 0 18 18" className="w-[18px] h-[18px] ml-[11px]" fill="none" stroke="#ddd" strokeWidth="1.300"><path d="M2 4h14v8H2zM6 16h6M9 12v4" /></svg>
        <svg viewBox="0 0 18 18" className="w-[18px] h-[18px] ml-[11px]" fill="none" stroke="#ddd" strokeWidth="1.300"><path d="M1 7h3l4-4v12l-4-4H1zM11 6a4 4 0 010 6M13 3a8 8 0 010 12" /></svg>
        <svg viewBox="0 0 18 18" className="w-[18px] h-[18px] ml-[13px]" fill="none" stroke="#ddd" strokeWidth="1.300"><circle cx="9" cy="9" r="7" /><path d="M2 9h14M9 2c-4 4-4 10 0 14M9 2c4 4 4 10 0 14" /></svg>
        <svg viewBox="0 0 18 18" className="w-[18px] h-[18px] ml-[13px]"><path d="M1 2h13v12H1z" fill="#ddd" /><path d="M6 7h11v10H6z" fill="#e89b3a" /></svg>
        <T w={29} c="ml-[13px]">ENG</T>
        <T w={36} c="ml-[16px]">18:08</T>
        <svg viewBox="0 0 18 18" className="w-[18px] h-[18px] ml-[30px] mr-[25px]"><path d="M1 2h16v11h-4l-4 4v-4H1z" fill="#eee" /></svg>
      </div>
      {/* playhead, edit cursor */}
      <div className="absolute left-[773px] top-[104px] w-px h-[226px] bg-[#8e1d1d]" />
      <svg viewBox="0 0 22 102" className="absolute left-[937px] top-[127px] w-[22px] h-[102px]"><path d="M0 0h22L11 11z" fill="#3a8272" /><path d="M11 10v92" stroke="#2ba385" /></svg>
      <div className="absolute left-[776px] top-[190px] flex items-center h-[18px] text-[12px]">
        <Knob s="w-[15px] h-[17px]" />
        <div className="w-[14px] h-[14px] bg-[#9a9a9a] text-[#333] ml-[3px] flex items-center justify-center">M</div>
        <div className="w-[15px] h-[14px] bg-[#9a9a9a] text-[#333] ml-[3px] flex items-center justify-center"><T w={12}>FX</T></div>
        <T w={160} c="ml-[6px] text-[13px] text-[#dedede]">[-15.0dB] noise_1000sec.wav</T>
      </div>
    </div>
  );
}

/* ---------- classic controls ---------- */
function Btn({ w, t, tw, dis, c = "" }: { w: string; t: string; tw?: number; dis?: boolean; c?: string }) {
  return (
    <div className={"border flex items-center justify-center shrink-0 overflow-hidden " + w + " " + (dis ? "bg-[#cccccc] border-[#bfbfbf] text-[#8a8a8a] " : "bg-[#e1e1e1] border-[#adadad] text-[#111] ") + c}>
      <T w={tw}>{t}</T>
    </div>
  );
}
function Combo({ w, t = "", tw, c = "" }: { w: string; t?: string; tw?: number; c?: string }) {
  return (
    <div className={"h-[24px] border border-[#adadad] bg-[#e1e1e1] flex items-center pl-[4px] pr-[6px] shrink-0 " + w + " " + c}>
      <T w={tw}>{t}</T><div className="grow" /><Chev c="w-[9px] h-[6px]" />
    </div>
  );
}
function Field({ w, t, tw, dis, c = "" }: { w: string; t: string; tw?: number; dis?: boolean; c?: string }) {
  return (
    <div className={"border flex items-center pl-[3px] shrink-0 " + w + " " + (dis ? "border-[#cfcfcf] text-[#7a7a7a] bg-[#f0f0f0] " : "border-[#7a7a7a] bg-white ") + c}>
      <T w={tw}>{t}</T>
    </div>
  );
}
const Check = ({ on, dis, c = "" }: { on?: boolean; dis?: boolean; c?: string }) => (
  <div className={"w-[15px] h-[16px] bg-white border shrink-0 flex items-center justify-center " + (dis ? "border-[#ccc] " : "border-[#333] ") + c}>
    {on && <svg viewBox="0 0 12 10" className="w-[11px] h-[9px]"><path d="M1 5l3.500 3.500L11 1" fill="none" stroke="#333" strokeWidth="1.500" /></svg>}
  </div>
);

function RenderDialog() {
  const g = "text-[#868686]";
  return (
    <div className={"absolute left-[2705px] top-[228px] w-[672px] h-[835px] bg-[#f0f0f0] text-[#111] text-[14px] leading-none shadow-[0_0_10px_rgba(0,0,0,0.45)] border-t border-[#777] " + MS}>
      <div className={"h-[32px] bg-white flex items-center text-[15px] text-[#8c8c8c] " + UI}>
        <Reaper s="w-[18px] h-[20px] ml-[3px]" /><T w={92} c="ml-[7px]">Render to File</T>
        <div className="grow" /><div className="mr-[15px] flex"><Cross /></div>
      </div>
      <div className="flex items-center h-[24px] mt-[12px] pl-[14px]">
        <T w={46}>Source:</T><Combo w="w-[240px] ml-[10px]" t="Master mix" tw={65} />
        <T w={48} c="ml-[8px]">Bounds:</T><Combo w="w-[190px] ml-[14px]" t="Entire project" tw={79} />
        <Btn w="w-[80px] h-[22px] ml-[7px] mt-[1px]" t="Presets" tw={46} />
      </div>
      <fieldset className="ml-[14px] mt-[6px] w-[644px] h-[56px] border border-[#dcdcdc]">
        <legend className="ml-[7px] px-[2px] h-[16px] leading-[16px]"><T w={78}>Time bounds</T></legend>
        <div className={"flex items-center h-[23px] mt-[12px] pl-[9px] " + g}>
          <T w={30}>Start:</T><Field w="w-[80px] h-[23px] ml-[12px]" dis t="0:00.000" tw={48} />
          <T w={26} c="ml-[8px]">End:</T><Field w="w-[84px] h-[23px] ml-[14px]" dis t="5:00.000" tw={48} />
          <T w={42} c="ml-[6px]">Length:</T><Field w="w-[80px] h-[23px] ml-[14px]" dis t="5:00.000" tw={48} />
          <Check c="ml-[68px] -mt-[4px]" /><T w={25} c="ml-[4px] -mt-[4px] text-[#111]">Tail:</T>
          <Field w="w-[62px] h-[23px] ml-[16px] -mt-[6px]" dis t="1000" tw={28} /><T w={18} c="ml-[8px] -mt-[5px] text-[#111]">ms</T>
        </div>
      </fieldset>
      <fieldset className="ml-[14px] mt-[6px] w-[644px] h-[118px] border border-[#dcdcdc]">
        <legend className="ml-[6px] px-[2px] h-[16px] leading-[16px]"><T w={38}>Output</T></legend>
        <div className="flex flex-col gap-[8px] mt-[6px]">
          <div className="flex items-center h-[24px] pl-[15px]"><T w={57}>Directory:</T><Field w="w-[450px] h-[24px] ml-[15px]" t="s\cimil\Develop\SPARTA\MEASURES\PAPER_PERF\Media\output\64spl" tw={443} /><Btn w="w-[86px] h-[24px] ml-[7px]" t="Browse..." tw={55} /></div>
          <div className="flex items-center h-[24px] pl-[87px]"><Field w="w-[450px] h-[24px]" t="" /><Btn w="w-[86px] h-[24px] ml-[7px]" t="Wildcards" tw={61} /></div>
          <div className="flex items-center h-[24px] pl-[87px]"><Field w="w-[450px] h-[24px] justify-end pr-[2px]" t="2025-01-16 18_07_11.wav" tw={150} /><Btn w="w-[86px] h-[24px] ml-[7px]" dis t="1 file" tw={26} /></div>
        </div>
      </fieldset>
      <div className="ml-[14px] mt-[13px] w-[644px] h-[234px] border border-[#dcdcdc] flex flex-col">
        <div className="flex mt-[13px] h-[24px]"><Combo w="w-[200px] ml-[211px]" /><Combo w="w-[170px] ml-[49px]" t="Full-speed Offline" tw={104} /></div>
        <div className="flex items-center mt-[13px] h-[16px]"><Check c="ml-[408px]" /><T w={97} c="ml-[3px]">2nd pass render</T></div>
        <div className="flex mt-[10px] h-[25px]"><Combo w="w-[200px] ml-[249px]" /><Btn w="w-[168px] h-[24px] ml-[13px] mt-[1px]" t="Normalize/Limit/Fade" tw={127} /></div>
        <div className="flex items-center mt-[9px] h-[16px]"><T w={12} c="ml-[407px]">er</T><Check dis c="ml-[62px]" /><T w={74} c={"ml-[4px] " + g}>Dither stems</T></div>
        <div className="flex items-center mt-[6px] h-[16px]"><T w={51} c="ml-[409px]">e master</T><Check dis c="ml-[20px]" /><T w={115} c={"ml-[4px] " + g}>Noise shape stems</T></div>
        <div className={"flex items-center mt-[10px] h-[16px] " + g}><T w={118} c="ml-[404px]">ped stretch markers</T></div>
        <div className={"flex items-center mt-[6px] h-[16px] " + g}><T w={106} c="ml-[404px]">ped take markers</T></div>
        <div className="flex items-center mt-[6px] h-[24px]"><T w={96} c="ml-[402px]">d new metadata</T><Btn w="w-[94px] h-[24px] ml-[38px]" dis t="Metadata..." tw={65} /></div>
      </div>
      <div className="ml-[14px] mt-[29px] w-[642px] h-[143px] border-2 border-white outline outline-[#dcdcdc] -outline-offset-1 flex flex-col">
        <div className="flex mt-[10px]"><Combo w="w-[200px] ml-[298px]" /></div>
        <div className="flex mt-[8px]"><Combo w="w-[180px] ml-[354px] pl-[52px]" t="AV/RF64" tw={56} /></div>
        <div className="flex mt-[12px]"><T w={38} c="ml-[405px]">F data</T></div>
        <div className="flex mt-[12px]"><T w={14} c="ml-[403px]">oo</T></div>
      </div>
      <div className="flex flex-col gap-[9.500px] mt-[16px]">
        <T w={213} c="ml-[417px]">dered items to new tracks in project</T>
        <T w={190} c="ml-[418px]">opy of project to outfile.wav.RPP</T>
        <T w={132} c="ml-[417px]">utfile.render_stats.html</T>
      </div>
      <div className="flex mt-[12px] justify-end pr-[15px]">
        <div className="w-[180px] h-[26px] border border-[#adadad] bg-[#e1e1e1] flex items-center justify-end pr-[21px]"><T w={40}>output)</T></div>
        <Btn w="w-[158px] h-[26px] ml-[10px]" t="Render 1 file" tw={74} />
      </div>
      <div className="flex mt-[10px] justify-end pr-[15px]"><Btn w="w-[84px] h-[26px]" t="Cancel" tw={42} /><Btn w="w-[118px] h-[26px] ml-[10px]" dis t="Save Settings" tw={83} /></div>
    </div>
  );
}

/* ---------- render progress window ---------- */
const peaks = ["-16.8", "-23.2", "-26.0", "-19.4", "-22.0", "-27.7", "-24.5", "-26.5", "-22.2", "-21.5", "-26.0", "-28.4", "-27.7", "-25.2", "-28.1"];
const marks: [string, string][] = [
  ["-60", "text-[#4f7c7b]"], ["-54", "text-[#5f8d89]"], ["-48", "text-[#6f9c97]"], ["-42", "text-[#7faaa3]"], ["-36", "text-[#93bbb2]"],
  ["-30", "text-[#a5ccc0]"], ["-24", "text-[#bcdfd0]"], ["-18", "text-[#c6ecd9]"], ["-12", "text-[#d2f7e3]"], ["-6", "text-[#dcfff0]"],
];
function FinishedDialog() {
  return (
    <div className={"absolute left-[2237px] top-[424px] w-[891px] h-[973px] bg-[#f0f0f0] text-[#111] text-[14px] leading-none shadow-[0_0_16px_rgba(0,0,0,0.6)] border-t border-[#444] flex flex-col " + MS}>
      <div className={"h-[37px] bg-white flex items-center text-[15px] text-[#222] shrink-0 " + UI}>
        <Reaper s="w-[18px] h-[20px] ml-[10px]" /><T w={211} c="ml-[6px]">Finished in 0:48    (6.2x realtime)</T>
        <div className="grow" />
        <div className="w-[12px] h-px bg-black" /><div className="w-[11px] h-[11px] border border-[#ccc] ml-[46px]" /><div className="ml-[47px] mr-[24px] flex"><Cross col="#111" /></div>
      </div>
      <fieldset className="ml-[14px] mt-[14px] w-[863px] h-[84px] border border-[#dcdcdc] shrink-0">
        <legend className="ml-[7px] px-[2px] h-[16px] leading-[16px]"><T w={57}>Output file</T></legend>
        <div className="ml-[11px] mt-[5px] w-[827px] h-[24px] border border-[#0067b8] flex items-center"><div className="ml-[2px] h-[17px] w-[103px] bg-[#0078d7] text-white flex items-center"><T w={102}>Dry run, no output</T></div></div>
        <div className="flex justify-center mt-[8px] pr-[12px]"><T w={133}>Dry run: 48000Hz, 64ch</T></div>
      </fieldset>
      <fieldset className="ml-[14px] mt-[12px] w-[863px] h-[734px] border border-[#dcdcdc] shrink-0">
        <legend className="ml-[7px] px-[2px] h-[16px] leading-[16px]"><T w={82}>Render status</T></legend>
        <div className="ml-[25px] mt-[10px] w-[810px] h-[15px] bg-[#06b025] border border-[#bcbcbc]" />
        <div className="flex justify-center mt-[14px] pr-[12px]"><T w={185}>Finished in 0:48    (6.2x realtime)</T></div>
        <div className="flex items-center mt-[12px]">
          <div className="w-[182px] flex justify-end"><T w={65}>Master mix</T></div>
          <div className="relative ml-[8px] w-[662px] h-[640px] overflow-hidden flex">
            <div className="w-[603px] h-full bg-[linear-gradient(90deg,#004b4a_0%,#004b47_40%,#00543f_65%,#006035_85%,#006233_100%)]">
              {Array.from({ length: 64 }, (_, r) => (
                <div key={r} className="flex h-[10px] -ml-[8px] leading-[13px]">
                  {marks.map(([m, c]) => <div key={m} className={"w-[58.300px] shrink-0 flex justify-center " + c}><T w={m === "-6" ? 11 : 18}>{m}</T></div>)}
                </div>
              ))}
            </div>
            <div className="w-[59px] h-full bg-[#440c00] text-white">
              {Array.from({ length: 64 }, (_, r) => <div key={r} className="flex h-[10px] leading-[13px] justify-end pr-[3px]"><T w={28}>{peaks[r] || "-24.3"}</T></div>)}
            </div>
            <svg viewBox="0 0 662 640" className="absolute left-0 top-0 w-[662px] h-[640px]"><path d="M325.500 76v15M339.500 91v10M342.500 101v10M382.500 121v20M338.500 141v10M358.500 151v489" stroke="#2fd09a" /></svg>
          </div>
        </div>
      </fieldset>
      <div className="flex flex-col items-end pr-[15px] mt-[23px] gap-[7px]"><Btn w="w-[126px] h-[26px]" t="Stats/Charts" tw={72} /><Btn w="w-[126px] h-[26px]" t="Close" tw={35} /></div>
    </div>
  );
}

/* ---------- FX windows ---------- */
function ParamWindow() {
  return (
    <div className={"absolute left-[2653px] top-[330px] w-[400px] h-[120px] bg-[#f0f0f0] text-[14px] leading-none text-[#222] shadow-[0_0_8px_rgba(0,0,0,0.5)] " + MS}>
      <div className={"h-[31px] bg-white flex items-center pl-[3px] text-[15px] text-[#9a9a9a] " + UI}><T w={75}>Parameter</T></div>
      <div className="flex items-center mt-[14px] ml-[16px]"><Check on /><T c="ml-[4px]">Enable</T></div>
      <div className="ml-[15px] mt-[6px] w-[200px] h-[27px] rounded-[10px] bg-[#bdbdbd] flex items-center pl-[9px]"><div className="w-[150px] h-[5px] bg-[#4a4a4a]" /></div>
    </div>
  );
}
const Val = ({ t, c = "" }: { t: string; c?: string }) => (
  <div className={"h-[25px] border border-[#4d5d64] flex items-center " + c}>{t}</div>
);
function Dial({ n, p, lw, pw, c }: { n: string; p: string; lw: number; pw: number; c: string }) {
  return (
    <div className={"w-[73px] flex flex-col items-center shrink-0 " + c}>
      <div className="flex h-[16px] items-center text-[11.500px]"><T w={lw} c="font-bold">{n}</T><T w={pw}>{p}</T></div>
      <svg viewBox="0 0 64 60" className="w-[64px] h-[60px] mt-[3px]"><path d="M32 32V2A30 30 0 0014 57z" fill="#b3b8b8" /><path d="M32 32L14 57A30 30 0 1150 57z" fill="none" stroke="#b9bfc0" strokeWidth="1.500" /></svg>
      <div className="w-[73px] h-[19px] mt-[4px] border border-[#9aa] flex items-center justify-center text-[14.500px]">0.00</div>
      <div className="flex items-center mt-[8px] text-[14px] font-bold"><T w={28}>+/-</T><div className="w-[17px] h-[17px] ml-[4px] rounded-full border-2 border-[#6c7578] bg-[#303030]" /></div>
    </div>
  );
}
function Plugin() {
  const pnl = "border border-[#45575e] bg-[#0f1d22]/70";
  return (
    <div className={"w-[1072px] h-[619px] ml-[377px] border-2 border-[#aab4b8] bg-[linear-gradient(#1b3242_0%,#0a1519_35%,#08171a_70%,#1b3242_100%)] text-white leading-none " + VD}>
      <div className="h-[36px] rounded-b-[6px] border-b-2 border-r-2 border-[#aab4b8] bg-[linear-gradient(90deg,#0a1519_0%,#0d1c22_25%,#1b3242_100%)] flex items-center">
        <div className="w-[112px] flex justify-end text-[18px] font-bold"><T w={80}>SPARTA|</T></div>
        <T w={166} c="text-[18px] font-bold bg-[linear-gradient(90deg,#9a10ff,#6a1aff,#4a1aff)] bg-clip-text text-transparent">MCFX-6DoFconv</T>
        <T w={313} c="ml-[18px] text-[14px]">6DoF Convolver with the MCFX convolution engine</T>
        <T w={285} c="ml-[24px] mt-[13px] text-[12px]">Ver 1.0.0alpha, Build Date Nov 21 2024 17:26:29</T>
      </div>
      <div className="flex pl-[13px]">
        <div className="w-[484px] flex flex-col text-[15px]">
          <div className="h-[32px] flex items-center pt-[12px] pl-[50px]"><T w={94} c="font-bold">SOFA dataset</T><T w={93} c="ml-[9px] mt-[2px] text-[12.500px]">SOFA file loaded</T></div>
          <div className={"h-[33px] flex items-center pl-[20px] " + pnl}>
            <div className="w-[417px] h-[25px] border border-[#7a8a90] rounded-[3px] bg-[#16282f] flex items-center justify-end pr-[14px]"><T w={330}>o-farina-proj\MATRICES(hrtf-and-SOFA)\SOFA\creat...</T><Chev c="w-[18px] h-[9px] ml-[14px]" col="#eee" sw={1.200} /></div>
            <div className="ml-[2px] w-[38px] h-[24px] border border-white rounded-r-[12px] flex items-center justify-center">...</div>
          </div>
          <div className={"h-[152px] mt-[2px] flex pt-[6px] " + pnl}>
            <div className="w-[148px] flex flex-col items-end gap-[2.500px] font-bold">
              {[["Block Size:", 105, ""], ["Positions:", 95, "mr-[-3px]"], ["IRs per pos:", 110, "mr-[21px]"], ["Inputs:", 65, "mr-[44px]"], ["Outputs:", 78, "mr-[32px]"]].map(([t, w, m]) => (
                <div key={t as string} className={"h-[25px] flex items-center " + m}><T w={w as number}>{t as string}</T></div>
              ))}
            </div>
            <div className="w-[75px] ml-[6px] flex flex-col gap-[2.500px]">{["64", "3", "64", "1", "64"].map((v, i) => <Val key={i} t={v} c="pl-[5px] bg-[#14232a]" />)}</div>
            <div className="ml-[2px] flex flex-col w-[252px]">
              {[["IR Length [s]:", 123, "0.2"], ["Filter Samplerate:", 156, "48000"], ["Host Samplerate:", 150, "48000"]].map(([t, w, v]) => (
                <div key={t as string} className="flex items-center mb-[2.500px] pl-[7px]"><div className="w-[163px] flex"><T w={w as number} c="font-bold">{t as string}</T></div><Val t={v as string} c="w-[76px] pl-[5px]" /></div>
              ))}
              <div className="border border-[#5a6a72] bg-[#1a2a31] h-[62px] flex flex-col gap-[2px] pt-[5px] pl-[6px]">
                <div className="flex items-center"><div className="w-[163px] flex"><T w={155} c="font-bold">1st Partition Size:</T></div><div className="w-[75px] h-[25px] border border-[#8a979c] rounded-[4px] flex items-center justify-between pl-[7px] pr-[3px] text-[12.500px] bg-[#22333b]">64<Chev c="w-[15px] h-[7px]" col="#ddd" sw={1} /></div></div>
                <div className="flex items-center"><div className="w-[163px] flex"><T w={162} c="font-bold">Max Partition Size:</T></div><div className="w-[75px] h-[25px] border border-[#8a979c] rounded-[4px] flex items-center justify-between pl-[7px] pr-[3px] text-[12.500px] bg-[#0a1114]"><span className="text-[#4c565a]">8192</span><Chev c="w-[15px] h-[7px]" col="#ddd" sw={1} /></div></div>
              </div>
            </div>
          </div>
          <div className={"h-[55px] mt-[6px] pl-[101px] flex gap-[9px] " + pnl}>
            {[["x", "1.5"], ["y", "-1.0"], ["z", "1.6"]].map(([a, v]) => (
              <div key={a} className="w-[61px] flex flex-col items-center"><span className="font-bold h-[24px] pt-[5px]">{a}</span><Val t={v} c="w-full justify-center bg-[#26343b] text-[#8c979b] border-[#6b7a80]" /></div>
            ))}
          </div>
          <div className="h-[27px] flex items-center pl-[120px] pt-[5px]"><T w={245} c="font-bold">Target Listener Position [m]</T></div>
          <div className={"h-[60px] pl-[101px] flex gap-[9px] " + pnl}>
            {[["x", "0.000", "bg-[#26343b] text-[#8c979b]"], ["y", "-1.810", "bg-[#14232a] border-[#9aa]"], ["z", "1.000", "bg-[#48606b] text-[#93a3aa]"]].map(([a, v, c]) => (
              <div key={a} className="w-[61px] flex flex-col items-center shrink-0"><span className="font-bold h-[28px] pt-[6px]">{a}</span><Val t={v} c={"w-full justify-center text-[14.500px] border-[#6b7a80] " + c} /></div>
            ))}
            <div className="w-[88px] -ml-[2px] border-x border-[#5a6a72] flex flex-col items-center bg-[#1a2a31] shrink-0"><span className="font-bold h-[28px] pt-[6px]"><T w={47}>Index</T></span><Val t="0" c="w-[60px] pl-[6px]" /></div>
            <div className="w-[86px] -ml-[9px] flex flex-col items-center bg-[#1a2a31] shrink-0"><span className="font-bold h-[28px] pt-[6px]"><T w={72}>OSC Port</T></span><Val t="9000" c="w-[53px] justify-center text-[14px] pt-[4px]" /></div>
          </div>
          <div className={"h-[32px] mt-[6px] flex items-center pl-[40px] " + pnl}>
            <div className="w-[153px] flex justify-end"><T w={150} c="font-bold">Update Time [ms]:</T></div>
            <Val t="1.3" c="w-[210px] ml-[6px] justify-center text-[#8c979b] border-[#6b7a80]" />
          </div>
          <div className="h-[23px] flex items-center justify-end pr-[60px] pt-[3px]"><T w={364} c="font-bold">Ambisonic Sound-Field Rotation [degrees]</T></div>
          <div className={"h-[143px] flex " + pnl}>
            <div className="w-[214px] border-r border-[#5a6a72] flex flex-col font-bold">
              <div className="flex justify-end pr-[37px] mt-[11px]"><T w={141}>Enable Rotation</T></div>
              <svg viewBox="0 0 20 20" className="w-[20px] h-[20px] ml-[95px] mt-[10px]"><circle cx="10" cy="10" r="8.500" fill="#333b3f" stroke="#666" strokeWidth="1.500" /><path d="M5 10l4 5 7-13" stroke="#fff" strokeWidth="2" fill="none" /></svg>
              <div className="flex flex-col text-[12px] gap-[8px] mt-[17px]">
                <T w={160} c="ml-[36px]">(Note that this rotation is</T>
                <T w={135} c="ml-[57px]">suitable if you have</T>
                <T w={107} c="ml-[79px]">Ambisonic IRs)</T>
              </div>
            </div>
            <div className="pl-[21px] pt-[8px] flex">
              <Dial n="Yaw " p="/ypr[0]" lw={35} pw={37} c="" /><Dial n="Pitch" p="/ypr[1]" lw={36} pw={37} c="ml-[6px]" /><Dial n="Roll" p="/ypr[2]" lw={27} pw={37} c="ml-[6px]" />
            </div>
          </div>
        </div>
        <div className="w-[549px] ml-[10px]">
          <div className="h-[32px] flex pt-[6px]">
            <T w={180} c="font-bold text-[16px] ml-[179px] mt-[8px]">Coordinate View [m]</T>
            <div className="ml-[74px] w-[115px] h-[21px] border border-[#8a979c] rounded-[4px] flex items-center pl-[7px] text-[14px] bg-[#16282f]"><T w={65}>Side View</T><Chev c="w-[18px] h-[8px] ml-[9px]" col="#eee" sw={1.500} /></div>
          </div>
          <div className="h-[541px] border border-[#45575e] bg-[linear-gradient(#1e323b_0%,#142228_12%,#132125_80%,#203646_100%)]">
            <svg viewBox="0 0 547 539" className={"w-[547px] h-[539px] " + VD} fontSize="12.500" fill="#98a1a4">
              {[1, 2, 3, 4, 6, 7, 8, 9, 11, 12, 13, 14].map(i => <path key={i} d={`M${11 + i * 25.700} 16v42`} stroke="#24393f" />)}
              <path d="M139.500 16v42M268.500 16v42" stroke="#77858a" /><path d="M11 34h383" stroke="#24393f" />
              <rect x="12" y="15" width="383" height="45" fill="none" stroke="#e3e6e7" strokeWidth="2" />
              <circle cx="49" cy="41" r="7.500" fill="#17474a" stroke="#2c6d70" /><circle cx="241" cy="41" r="7.500" fill="#17474a" stroke="#2c6d70" />
              <circle cx="305" cy="34" r="6.500" fill="#f0f" stroke="#f9c" /><circle cx="357" cy="73" r="6.500" fill="#ff9c0a" stroke="#fdc" /><circle cx="433" cy="41" r="9" fill="#058405" stroke="#8c8" />
              <text x="442" y="34" fill="#eee">0</text>
              <text x="7" y="77">3.6</text><text x="135" y="77">1.6</text><text x="260" y="77">-0.4</text><text x="389" y="77">-2.4</text><text x="404" y="64">1.2</text><text x="216" y="96">Y</text>
            </svg>
          </div>
        </div>
      </div>
    </div>
  );
}
function FxWindow() {
  return (
    <div className={"absolute left-[2900px] top-[326px] w-[1452px] h-[753px] bg-[#f0f0f0] text-[14px] leading-none text-[#111] " + MS}>
      <div className="h-[60px] bg-white flex items-start">
        <div className="grow" />
        <svg viewBox="0 0 14 16" className="w-[14px] h-[16px] mt-[10px]"><path d="M3 1h8M4.500 1v6M9.500 1v6M1.500 9c0-2 2-2 3-2h5c1 0 3 0 3 2zM7 9v6" fill="none" stroke="#777" /></svg>
        <div className="w-[25px] h-[24px] bg-[#e6e6e6] ml-[40px] mr-[1px] mt-[8px]" />
      </div>
      <div className="flex mt-[5px] h-[24px]"><Field w="w-[1417px] h-[24px]" t="" /><Btn w="w-[24px] h-[21px] ml-[8px] mt-[1px]" t="..." /></div>
      <div className="flex items-center mt-[7px] h-[24px]">
        <Combo w="w-[1154px]" /><Btn w="w-[22px] h-[22px] ml-[7px]" t="+" /><Btn w="w-[58px] h-[22px] ml-[6px]" t="Param" tw={40} /><Btn w="w-[98px] h-[22px] ml-[6px]" t="64 in+out" tw={52} /><Btn w="w-[32px] h-[22px] ml-[6px]" t="UI" tw={13} />
        <svg viewBox="0 0 26 26" className="w-[26px] h-[26px] ml-[4px]"><circle cx="13" cy="13" r="12" fill="#cdd2d0" stroke="#777" /><path d="M13 13l3 8" stroke="#222" strokeWidth="1.500" /></svg><Check on c="ml-[5px]" />
      </div>
      <div className="h-[9px]" />
      <Plugin />
    </div>
  );
}

export default function App() {
  return (
    <div className="w-screen h-screen overflow-hidden bg-black">
      <div className="relative w-[4480px] h-[1440px] overflow-hidden bg-black [zoom:0.9142857]">
        <Explorer />
        <ReaperMain />
        <FxWindow />
        <ParamWindow />
        <RenderDialog />
        <FinishedDialog />
      </div>
    </div>
  );
}
